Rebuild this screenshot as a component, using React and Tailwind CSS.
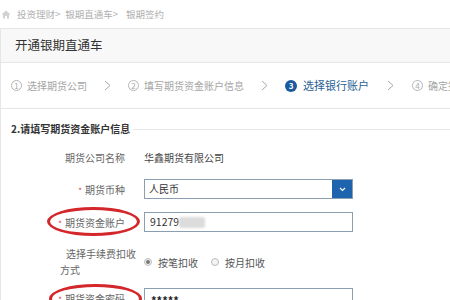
const font = "font-['Microsoft_YaHei','Noto_Sans_CJK_SC',sans-serif]";

function Chevron() {
  return (
    <svg width="7" height="11" viewBox="0 0 7 11" className="shrink-0">
      <polyline points="1,1 6,5.5 1,10" fill="none" stroke="#a8a8a8" strokeWidth="1" />
    </svg>
  );
}

function NumCircle({ n, active }) {
  if (active) {
    return (
      <span className="flex h-[12px] w-[12px] shrink-0 items-center justify-center rounded-full bg-[#1b5a9c] text-[8px] font-bold leading-none text-white">
        {n}
      </span>
    );
  }
  return (
    <span className="flex h-[11px] w-[11px] shrink-0 items-center justify-center rounded-full border border-[#b5b5b5] text-[8px] leading-none text-[#aaa]">
      {n}
    </span>
  );
}

function Label({ children, required }) {
  return (
    <div className="w-[124px] shrink-0 text-right text-[10px] text-[#666]">
      {required && <span className="mr-[3px] text-[8px] text-[#e03a3a]">*</span>}
      {children}
    </div>
  );
}

function Radio({ checked, label }) {
  return (
    <label className="flex items-center gap-[6px] text-[10px] text-[#555]">
      <span className="flex h-[8px] w-[8px] items-center justify-center rounded-full border border-[#bbb] bg-[#f4f4f4]">
        {checked && <span className="h-[4px] w-[4px] rounded-full bg-[#777]" />}
      </span>
      {label}
    </label>
  );
}

export default function App() {
  return (
    <div className={`h-[300px] w-[450px] overflow-hidden bg-white ${font}`}>
      {/* breadcrumb */}
      <div className="flex h-[28px] items-center whitespace-nowrap pl-[1px] text-[9.5px] text-[#b0b0b0]">
        <svg width="10" height="9" viewBox="0 0 10 9" className="mr-[6px]">
          <path d="M5 0.5 L9.5 4.5 H8 V8.5 H6 V6 H4 V8.5 H2 V4.5 H0.5 Z" fill="#d2d2d2" />
        </svg>
        <span>投资理财&gt;</span>
        <span className="ml-[5px]">银期直通车&gt;</span>
        <span className="ml-[8px]">银期签约</span>
      </div>

      <div className="border-l border-t border-[#e6e6e6]">
        {/* header */}
        <div className="flex h-[34px] items-center border-b border-[#e6e6e6] bg-[#f8f8f8] pl-[14px] text-[12.5px] text-[#333]">
          开通银期直通车
        </div>

        {/* steps */}
        <div className="flex h-[46px] items-center whitespace-nowrap border-b border-[#e6e6e6] pl-[10px] text-[10px] text-[#a5a5a5]">
          <NumCircle n="1" />
          <span className="ml-[5px]">选择期货公司</span>
          <span className="ml-[17px] mr-[17px]"><Chevron /></span>
          <NumCircle n="2" />
          <span className="ml-[5px]">填写期货资金账户信息</span>
          <span className="ml-[17px] mr-[17px]"><Chevron /></span>
          <NumCircle n="3" active />
          <span className="ml-[6px] text-[11px] text-[#2a5f94]">选择银行账户</span>
          <span className="ml-[18px] mr-[18px]"><Chevron /></span>
          <NumCircle n="4" />
          <span className="ml-[5px]">确定签约</span>
        </div>

        {/* section */}
        <div className="mt-[12px] flex items-center pl-[10px]">
          <span className="whitespace-nowrap text-[10px] font-bold leading-[16px] text-[#333]">
            2.请填写期货资金账户信息
          </span>
          <span className="ml-[3px] h-px flex-1 bg-[#e8e8e8]" />
        </div>

        {/* form */}
        <div className="mt-[10px] flex h-[20px] items-center">
          <Label>期货公司名称</Label>
          <span className="ml-[19px] text-[10px] text-[#444]">华鑫期货有限公司</span>
        </div>

        <div className="mt-[12px] flex h-[20px] items-center">
          <Label required>期货币种</Label>
          <div className="ml-[19px] flex h-[20px] w-[209px] border border-[#8aa0b2]">
            <span className="flex-1 pl-[4px] text-[10px] leading-[18px] text-[#333]">人民币</span>
            <span className="flex w-[20px] items-center justify-center bg-[#1d63ad]">
              <svg width="7" height="5" viewBox="0 0 7 5">
                <polyline points="1,1 3.5,3.5 6,1" fill="none" stroke="#fff" strokeWidth="1.2" />
              </svg>
            </span>
          </div>
        </div>

        <div className="relative mt-[13px] flex h-[20px] items-center">
          <Label required>期货资金账户</Label>
          <div className="ml-[19px] flex h-[20px] w-[209px] items-center border border-[#8aa0b2] pl-[5px] text-[10.5px] text-[#333]">
            91279
            <span className="h-[11px] w-[26px] rounded-[2px] bg-[#dcdcdc] blur-[1px]" />
          </div>
          <span className="absolute left-[46px] top-[-5px] h-[29px] w-[93px] rounded-[50%] border-[3px] border-[#d3272b]" />
        </div>

        <div className="mt-[14px] flex items-center">
          <div className="ml-[59px] w-[77px] shrink-0 text-[10px] leading-[16px] text-[#666]">
            <div className="pl-[6px]">选择手续费扣收</div>
            <div>方式</div>
          </div>
          <div className="ml-[7px] flex items-center gap-[13px]">
            <Radio checked label="按笔扣收" />
            <Radio label="按月扣收" />
          </div>
        </div>

        <div className="relative mt-[10px] flex h-[20px] items-center">
          <Label required>期货资金密码</Label>
          <div className="ml-[19px] flex h-[20px] w-[209px] items-center border border-[#8aa0b2] pl-[6px] pt-[4px] text-[11px] font-bold text-[#222]">
            *****
          </div>
          <span className="absolute left-[48px] top-[-4px] h-[29px] w-[93px] rounded-[50%] border-[3px] border-[#d3272b]" />
        </div>
      </div>
    </div>
  );
}
